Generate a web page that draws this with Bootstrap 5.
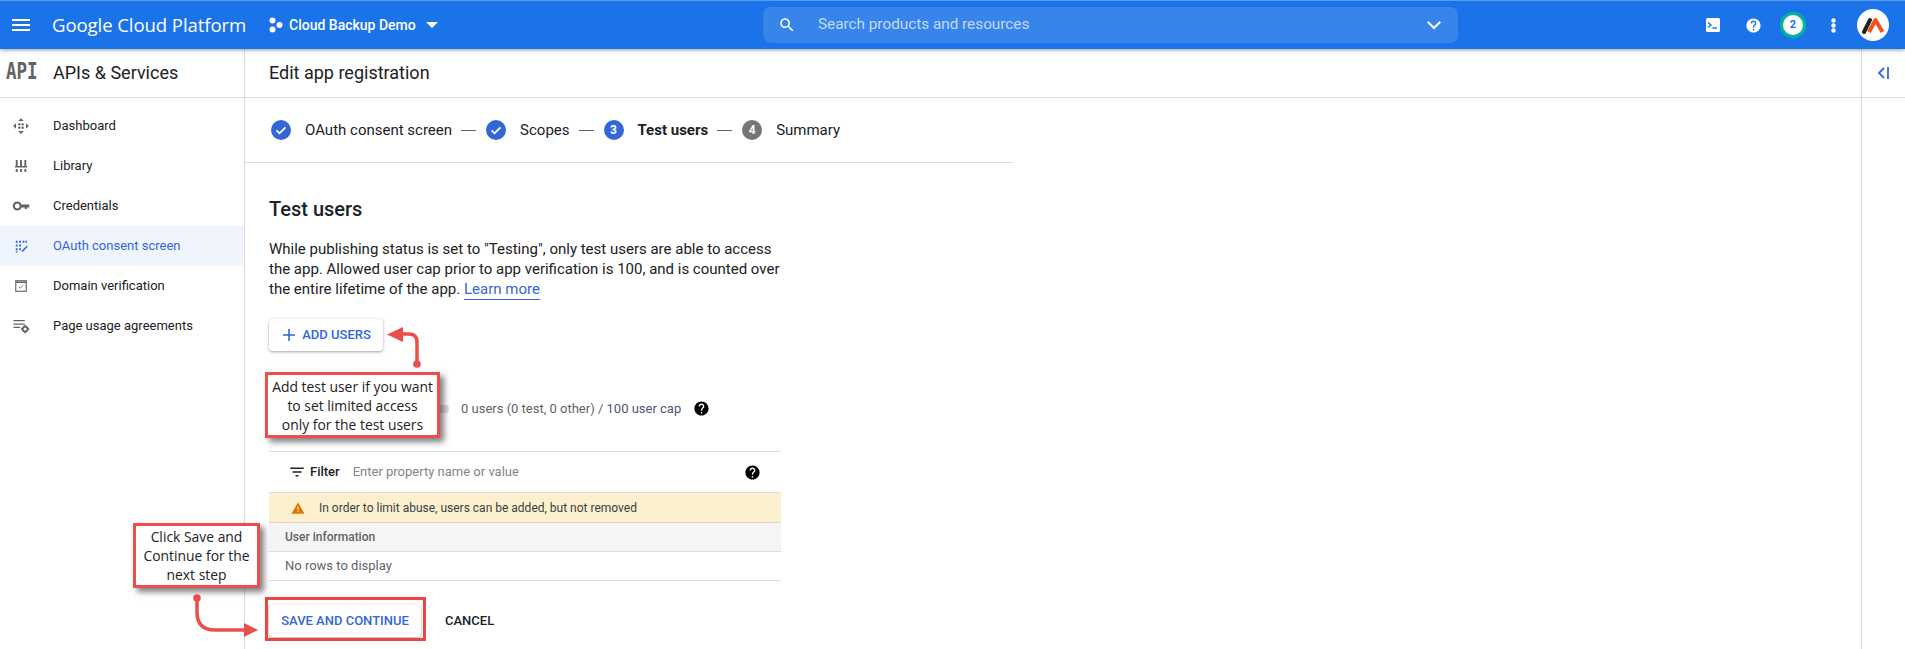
<!DOCTYPE html>
<html lang="en"><head><meta charset="utf-8"><title>Edit app registration</title>
<link href="https://cdn.jsdelivr.net/npm/bootstrap@5.3.0/dist/css/bootstrap.min.css" rel="stylesheet">
<style>
html,body{height:100%;overflow:hidden}
body{font-family:Roboto,"Liberation Sans",sans-serif;font-size:14px;color:#202124;background:#fff;position:relative}
svg{display:block;flex:none}
.gcp-top{height:49px;background:#1a73e8;border-top:1px solid #5c9bee;padding:0;box-shadow:0 1px 4px rgba(60,64,67,.55);position:relative;z-index:3;flex-wrap:nowrap;align-items:center;justify-content:flex-start}
.gcp-menu{margin-left:9px;width:24px}
.gcp-brand{font-family:"Open Sans",Lato,sans-serif;font-size:18.6px;color:#fff;margin-left:19px;width:208px;white-space:nowrap;letter-spacing:-.1px}
.gcp-proj{color:#fff;font-weight:500;font-size:14px;width:494px;gap:6px;margin-left:9px}
.gcp-search{width:695px;height:36px;background:rgba(255,255,255,.13);border-radius:8px;color:#c3d9f8;font-size:15.3px;padding:0 12px 0 15px}
.gcp-search span{margin:0 0 2px 22px;flex:1}
.gcp-actions{margin-left:auto;padding-right:12px;align-items:center}
.gcp-slot{width:40px;display:flex;align-items:center;justify-content:center}
.gcp-avatar-ring{width:26px;height:26px;border-radius:50%;border:3px solid #00b894;background:#fff;color:#1a73e8;font-size:11px;font-weight:700;display:flex;align-items:center;justify-content:center}
.gcp-avatar{width:32px;height:32px;border-radius:50%;background:#fff}
.gcp-shell{height:600px}
.gcp-side{width:245px;flex:none;border-right:1px solid #dadce0}
.gcp-side-head{height:49px;border-bottom:1px solid #dadce0;padding-bottom:2px;font-size:18px;color:#202124}
.gcp-api{display:inline-block;width:53px;padding-left:6px;font-family:"DejaVu Sans Mono","Liberation Mono",monospace;font-weight:700;font-size:17.5px;line-height:1;color:#5f6368;letter-spacing:0}
.gcp-api i{display:inline-block;font-style:normal;transform:scaleY(1.3)}
.gcp-nav{padding-top:8px}
.gcp-nav .list-group-item{height:40px;padding:0 0 0 12px;border:0;border-radius:0;display:flex;align-items:center;gap:23px;font-size:13px;color:#202124;background:transparent}
.gcp-nav .list-group-item.gcp-on{background:#eff4fd;color:#3367d6}
.gcp-main{flex:1;min-width:0}
.gcp-title{height:49px;border-bottom:1px solid #dadce0;padding-bottom:2px;font-size:18px;padding-left:24px}
.gcp-steps{width:768px;height:65px;border-bottom:1px solid #dadce0;padding-left:26px;font-size:15px}
.gcp-dash{width:15px;height:1px;background:#5f6368;margin:0 10px 0 9px}
.gcp-stepnum{width:20px;height:20px;border-radius:50%;background:#3367d6;color:#fff;font-size:12px;font-weight:700;display:flex;align-items:center;justify-content:center;flex:none;margin-right:14px}
.gcp-stepnum.gcp-grey{background:#757575}
.gcp-check{margin-right:14px}
.gcp-body{padding:34px 0 0 24px;width:600px}
.gcp-h{font-size:20px;font-weight:500;line-height:24px;margin:0 0 18px;color:#202124}
.gcp-p{line-height:20px;width:520px;margin:0 0 20px;font-size:15px;color:#202124}
.gcp-p a{color:#3367d6;text-decoration:none;border-bottom:1px solid #3367d6;padding-bottom:1px}
.gcp-raised{background:#fff;border:0;border-radius:4px;box-shadow:0 1px 2px rgba(60,64,67,.3),0 1px 3px 1px rgba(60,64,67,.15);color:#3367d6;font-size:13px;font-weight:500;height:32px;padding:0;display:flex;align-items:center;justify-content:center;white-space:nowrap}
.gcp-add{width:114px;gap:5px}
.gcp-cap{height:100px;padding-top:48px;font-size:13px;line-height:20px;color:#5f6368;align-items:flex-start}
.gcp-bar{width:180px;height:8px;border-radius:4px;background:#dadce0;margin:6px 12px 0 0}
.gcp-cap b{font-weight:400;color:#4b5675}
.gcp-cap svg{margin:1px 0 0 12px}
.gcp-table{width:512px;border-top:1px solid #dadce0;font-size:13px}
.gcp-filter{height:40px;padding:0 20px 0 19px;color:#80868b;font-size:13px}
.gcp-filter strong{font-weight:500;color:#202124;margin:0 13px 0 4px}
.gcp-warn{height:31px;background:#fdf0cf;border-top:1px solid #dadce0;border-bottom:1px solid #e3d7b6;padding-left:22px;gap:14px;color:#3c4043;font-size:12px}
.gcp-th{height:29px;background:#f5f5f5;border-bottom:1px solid #dadce0;padding-left:16px;color:#5f6368;font-weight:500;font-size:12px}
.gcp-empty{height:29px;border-bottom:1px solid #dadce0;padding-left:16px;color:#5f6368;font-size:13px}
.gcp-actions-row{margin-top:24px;gap:24px}
.gcp-save{width:152px}
.gcp-cancel{font-size:13px;font-weight:500;color:#202124;white-space:nowrap}
.gcp-rail{width:44px;flex:none;border-left:1px solid #dadce0}
.gcp-rail-head{height:49px;border-bottom:1px solid #dadce0;padding-left:15px}
.gcp-note{position:absolute;background:#fff;border:3px solid #e9504c;box-shadow:4px 4px 6px rgba(0,0,0,.5);font-family:"Open Sans","Noto Sans",sans-serif;font-size:13.9px;line-height:19px;color:#222;text-align:center;z-index:5;display:flex;align-items:center;justify-content:center}
.gcp-note1{left:265px;top:372px;width:175px;height:66px}
.gcp-note2{left:133px;top:523px;width:127px;height:65px}
.gcp-hilite{position:absolute;left:265px;top:597px;width:161px;height:44px;border:3px solid #f04343;z-index:5;pointer-events:none}
.gcp-arrow{position:absolute;z-index:5}
</style></head><body>
<nav class="navbar gcp-top">
 <svg class="gcp-menu" width="24" height="24" viewBox="0 0 24 24" fill="#fff"><path d="M3 18h18v-2H3v2zm0-5h18v-2H3v2zm0-7v2h18V6H3z"/></svg>
 <div class="gcp-brand">Google Cloud Platform</div>
 <div class="gcp-proj d-flex align-items-center">
  <svg width="14" height="16" viewBox="0 0 14 16" fill="#fff"><circle cx="3.500" cy="3.500" r="3"/><circle cx="3.500" cy="12.500" r="3"/><circle cx="10.500" cy="8" r="3"/></svg>
  <span>Cloud Backup Demo</span>
  <svg class="ms-1" width="12" height="6" viewBox="0 0 12 6" fill="#fff"><path d="M0 0h12L6 6z"/></svg>
 </div>
 <div class="gcp-search d-flex align-items-center">
  <svg width="18" height="18" viewBox="0 0 24 24" fill="#fff"><path d="M15.500 14h-.79l-.28-.27C15.410 12.590 16 11.110 16 9.500 16 5.910 13.090 3 9.500 3S3 5.910 3 9.500 5.910 16 9.500 16c1.610 0 3.090-.59 4.230-1.570l.27.28v.79l5 4.990L20.490 19l-4.990-5zm-6 0C7.010 14 5 11.990 5 9.500S7.010 5 9.500 5 14 7.010 14 9.500 11.990 14 9.500 14z"/></svg>
  <span>Search products and resources</span>
  <svg width="24" height="24" viewBox="0 0 24 24" fill="#fff"><path d="M6.400 8l5.600 5.600L17.600 8 19 9.400l-7 7-7-7z"/></svg>
 </div>
 <div class="gcp-actions d-flex">
  <div class="gcp-slot"><svg width="14" height="14" viewBox="0 0 14 14"><rect width="14" height="14" rx="1.500" fill="#fff"/><path d="M2 4.500L5 7 2 9.500" fill="none" stroke="#1a73e8" stroke-width="1.500"/><path d="M6.500 10h4.500" stroke="#1a73e8" stroke-width="1.500"/></svg></div>
  <div class="gcp-slot"><svg width="17" height="17" viewBox="0 0 24 24" fill="#fff"><path d="M12 2C6.480 2 2 6.480 2 12s4.480 10 10 10 10-4.480 10-10S17.520 2 12 2zm1 17h-2v-2h2v2zm2.070-7.750l-.9.920C13.450 12.900 13 13.500 13 15h-2v-.5c0-1.100.45-2.100 1.170-2.830l1.240-1.260c.37-.36.59-.86.59-1.410 0-1.100-.9-2-2-2s-2 .9-2 2H8c0-2.210 1.790-4 4-4s4 1.790 4 4c0 .88-.36 1.680-.93 2.250z"/></svg></div>
  <div class="gcp-slot"><div class="gcp-avatar-ring">2</div></div>
  <div class="gcp-slot"><svg width="5" height="15" viewBox="0 0 5 15" fill="#fff"><circle cx="2.500" cy="2.500" r="2.200"/><circle cx="2.500" cy="7.500" r="2.200"/><circle cx="2.500" cy="12.500" r="2.200"/></svg></div>
  <div class="gcp-slot"><svg class="gcp-avatar" viewBox="0 0 32 32"><path d="M7 23L13 11" stroke="#222" stroke-width="4" stroke-linecap="round"/><path d="M12 23L18.500 11l7 12" fill="none" stroke="#f4511e" stroke-width="4" stroke-linejoin="round"/></svg></div>
 </div>
</nav>
<div class="gcp-shell d-flex">
 <aside class="gcp-side">
  <div class="gcp-side-head d-flex align-items-center"><span class="gcp-api"><i>API</i></span><span>APIs &amp; Services</span></div>
  <div class="list-group gcp-nav">
   <a class="list-group-item" href="#"><svg width="18" height="18" viewBox="0 0 24 24" fill="#5f6368"><path d="M12 1.500l3.800 3.800H8.200zM12 22.500l-3.800-3.800h7.600zM1.500 12l3.800-3.800v7.600zM22.500 12l-3.800 3.800V8.200z"/><circle cx="9.800" cy="9.800" r="1.600"/><circle cx="14.200" cy="9.800" r="1.600"/><circle cx="9.800" cy="14.200" r="1.600"/><circle cx="14.200" cy="14.200" r="1.600"/></svg>Dashboard</a>
   <a class="list-group-item" href="#"><svg width="18" height="18" viewBox="0 0 24 24" fill="#5f6368"><path d="M5 4h2.500v8H5zM10.700 4h2.500v8h-2.500zM16.500 4H19v8h-2.500zM4 12h16v2H4zM5 16h2.500v4H5zM10.700 16h2.500v4h-2.500zM16.500 16H19v4h-2.500z"/></svg>Library</a>
   <a class="list-group-item" href="#"><svg width="18" height="18" viewBox="0 0 24 24" fill="#5f6368"><path d="M12.650 10C11.830 7.670 9.610 6 7 6c-3.310 0-6 2.690-6 6s2.690 6 6 6c2.610 0 4.830-1.670 5.650-4H17v2h3v-2h3v-4H12.650zM7 15.200c-1.770 0-3.200-1.430-3.200-3.200S5.230 8.800 7 8.800s3.200 1.430 3.200 3.200-1.430 3.200-3.200 3.200z"/></svg>Credentials</a>
   <a class="list-group-item gcp-on" href="#"><svg width="18" height="18" viewBox="0 0 24 24" fill="#3367d6"><path d="M5 5h2.500v2.500H5zM9.500 5H12v2.500H9.500zM14 5h2.500v2.500H14zM18 5h2v2.500h-2zM5 10h2.500v2.500H5zM9.500 10H12v2.500H9.500zM5 15h2.500v2.500H5zM5 19h2.500v1.500H5zM9.500 15H12v2.500H9.500zM13 18l6.500-6.500 1.500 1.500-6.500 6.500H13z"/></svg>OAuth consent screen</a>
   <a class="list-group-item" href="#"><svg width="18" height="18" viewBox="0 0 24 24" fill="none" stroke="#5f6368"><rect x="5" y="5" width="14" height="14" stroke-width="1.500"/><path d="M5 7h14" stroke-width="2"/><path d="M9 13l2 2 4-4" stroke-width="1.200"/></svg>Domain verification</a>
   <a class="list-group-item" href="#"><svg width="18" height="18" viewBox="0 0 24 24" fill="#5f6368"><path d="M2 4h15v1.800H2zM2 8.500h15v1.800H2zM2 13h9v1.800H2z"/><circle cx="17.500" cy="16" r="3.300" fill="none" stroke="#5f6368" stroke-width="2.400"/><path d="M16.500 10.500h2v2h-2zM16.500 19.500h2v2h-2zM12 15h2v2h-2zM21 15h2v2h-2z"/></svg>Page usage agreements</a>
  </div>
 </aside>
 <main class="gcp-main">
  <div class="gcp-title d-flex align-items-center">Edit app registration</div>
  <div class="gcp-steps d-flex align-items-center">
   <svg class="gcp-check" width="20" height="20" viewBox="0 0 20 20"><circle cx="10" cy="10" r="10" fill="#3367d6"/><path d="M5.500 10.300l3 3 6-6" fill="none" stroke="#fff" stroke-width="1.800"/></svg><span>OAuth consent screen</span><i class="gcp-dash"></i>
   <svg class="gcp-check" width="20" height="20" viewBox="0 0 20 20"><circle cx="10" cy="10" r="10" fill="#3367d6"/><path d="M5.500 10.300l3 3 6-6" fill="none" stroke="#fff" stroke-width="1.800"/></svg><span>Scopes</span><i class="gcp-dash"></i>
   <span class="gcp-stepnum">3</span><span class="fw-bold">Test users</span><i class="gcp-dash"></i>
   <span class="gcp-stepnum gcp-grey">4</span><span>Summary</span>
  </div>
  <div class="gcp-body">
   <h2 class="gcp-h">Test users</h2>
   <p class="gcp-p">While publishing status is set to "Testing", only test users are able to access the app. Allowed user cap prior to app verification is 100, and is counted over the entire lifetime of the app. <a href="#">Learn more</a></p>
   <button class="btn gcp-raised gcp-add" type="button"><svg width="16" height="16" viewBox="0 0 24 24" fill="#3367d6"><path d="M21 13.200h-7.800V21h-2.400v-7.800H3v-2.400h7.800V3h2.400v7.800H21z"/></svg>ADD USERS</button>
   <div class="gcp-cap d-flex"><div class="gcp-bar"></div><span>0 users (0 test, 0 other) / <b>100 user cap</b></span>
    <svg width="17" height="17" viewBox="0 0 24 24" fill="#000"><path d="M12 2C6.480 2 2 6.480 2 12s4.480 10 10 10 10-4.480 10-10S17.520 2 12 2zm1 17h-2v-2h2v2zm2.070-7.750l-.9.920C13.450 12.900 13 13.500 13 15h-2v-.5c0-1.100.45-2.100 1.170-2.830l1.240-1.260c.37-.36.59-.86.59-1.410 0-1.100-.9-2-2-2s-2 .9-2 2H8c0-2.210 1.790-4 4-4s4 1.790 4 4c0 .88-.36 1.680-.93 2.250z"/></svg></div>
   <div class="gcp-table">
    <div class="gcp-filter d-flex align-items-center"><svg width="18" height="18" viewBox="0 0 24 24" fill="#202124"><path d="M10 18h4v-2h-4v2zM3 6v2h18V6H3zm3 7h12v-2H6v2z"/></svg><strong>Filter</strong><span class="flex-grow-1">Enter property name or value</span>
     <svg width="17" height="17" viewBox="0 0 24 24" fill="#000"><path d="M12 2C6.480 2 2 6.480 2 12s4.480 10 10 10 10-4.480 10-10S17.520 2 12 2zm1 17h-2v-2h2v2zm2.070-7.750l-.9.920C13.450 12.900 13 13.500 13 15h-2v-.5c0-1.100.45-2.100 1.170-2.830l1.240-1.260c.37-.36.59-.86.59-1.410 0-1.100-.9-2-2-2s-2 .9-2 2H8c0-2.210 1.790-4 4-4s4 1.790 4 4c0 .88-.36 1.680-.93 2.250z"/></svg></div>
    <div class="gcp-warn d-flex align-items-center"><svg width="14" height="14" viewBox="0 0 24 24" fill="#e37400"><path d="M1 22h22L12 2 1 22zm12-3h-2v-2h2v2zm0-4h-2v-5h2v5z"/></svg><span>In order to limit abuse, users can be added, but not removed</span></div>
    <div class="gcp-th d-flex align-items-center">User information</div>
    <div class="gcp-empty d-flex align-items-center">No rows to display</div>
   </div>
   <div class="gcp-actions-row d-flex align-items-center"><button class="btn gcp-raised gcp-save" type="button">SAVE AND CONTINUE</button><span class="gcp-cancel">CANCEL</span></div>
  </div>
 </main>
 <div class="gcp-rail"><div class="gcp-rail-head d-flex align-items-center"><svg width="12" height="12" viewBox="0 0 12 12" fill="none" stroke="#3367d6" stroke-width="1.800"><path d="M7 1L2 6l5 5M11 0v12"/></svg></div></div>
</div>
<div class="gcp-note gcp-note1"><div>Add test user if you want<br>to set limited access<br>only for the test users</div></div>
<div class="gcp-note gcp-note2"><div>Click Save and<br>Continue for the<br>next step</div></div>
<div class="gcp-hilite"></div>
<svg class="gcp-arrow" style="left:380px;top:322px" width="45" height="50" viewBox="0 0 45 50"><path d="M20 12h9q8 0 8 8v22" fill="none" stroke="#e9504c" stroke-width="3.500"/><path d="M7 12.500L23 5v15z" fill="#e9504c"/><circle cx="37" cy="42" r="3.800" fill="#e9504c"/></svg>
<svg class="gcp-arrow" style="left:190px;top:590px" width="72" height="50" viewBox="0 0 72 50"><path d="M7 8v14q0 18 18 18h30" fill="none" stroke="#e9504c" stroke-width="3.500"/><path d="M54 33l14 7-14 7z" fill="#e9504c"/><circle cx="7" cy="8" r="3.800" fill="#e9504c"/></svg>
<script src="https://cdn.jsdelivr.net/npm/bootstrap@5.3.0/dist/js/bootstrap.bundle.min.js"></script>
</body></html>
